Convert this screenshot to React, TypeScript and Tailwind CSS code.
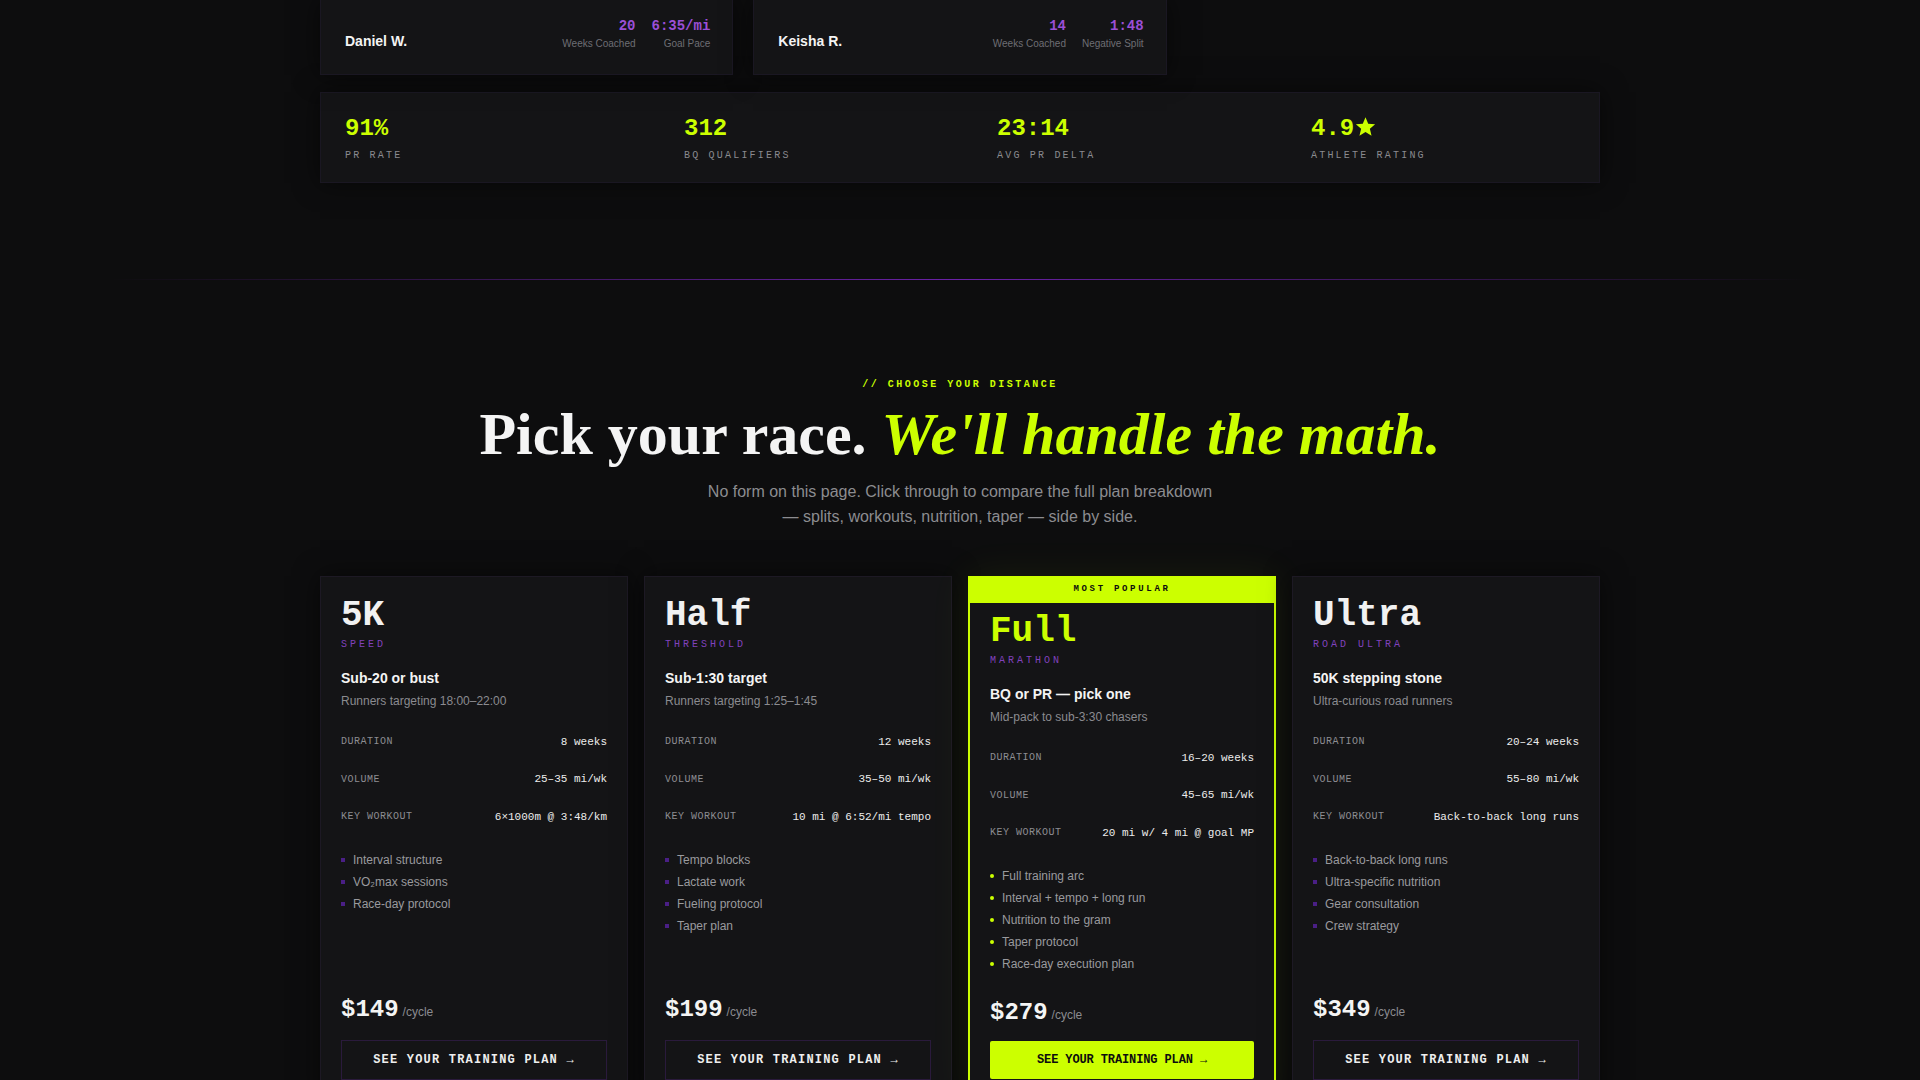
import React from "react";

const mono = "font-['Liberation_Mono',monospace]";
const sans = "font-['Liberation_Sans',Arial,sans-serif]";
const serif = "font-['Liberation_Serif','Times_New_Roman',serif]";

type Plan = {
  name: string;
  tag: string;
  headline: string;
  audience: string;
  duration: string;
  volume: string;
  keyWorkout: string;
  features: React.ReactNode[];
  price: string;
  popular?: boolean;
};

const plans: Plan[] = [
  {
    name: "5K",
    tag: "Speed",
    headline: "Sub-20 or bust",
    audience: "Runners targeting 18:00–22:00",
    duration: "8 weeks",
    volume: "25–35 mi/wk",
    keyWorkout: "6×1000m @ 3:48/km",
    features: ["Interval structure", "VO₂max sessions", "Race-day protocol"],
    price: "$149",
  },
  {
    name: "Half",
    tag: "Threshold",
    headline: "Sub-1:30 target",
    audience: "Runners targeting 1:25–1:45",
    duration: "12 weeks",
    volume: "35–50 mi/wk",
    keyWorkout: "10 mi @ 6:52/mi tempo",
    features: ["Tempo blocks", "Lactate work", "Fueling protocol", "Taper plan"],
    price: "$199",
  },
  {
    name: "Full",
    tag: "Marathon",
    headline: "BQ or PR — pick one",
    audience: "Mid-pack to sub-3:30 chasers",
    duration: "16–20 weeks",
    volume: "45–65 mi/wk",
    keyWorkout: "20 mi w/ 4 mi @ goal MP",
    features: [
      "Full training arc",
      "Interval + tempo + long run",
      "Nutrition to the gram",
      "Taper protocol",
      "Race-day execution plan",
    ],
    price: "$279",
    popular: true,
  },
  {
    name: "Ultra",
    tag: "Road Ultra",
    headline: "50K stepping stone",
    audience: "Ultra-curious road runners",
    duration: "20–24 weeks",
    volume: "55–80 mi/wk",
    keyWorkout: "Back-to-back long runs",
    features: [
      "Back-to-back long runs",
      "Ultra-specific nutrition",
      "Gear consultation",
      "Crew strategy",
    ],
    price: "$349",
  },
];

const testimonials = [
  {
    name: "Daniel W.",
    stats: [
      { value: "20", label: "Weeks Coached" },
      { value: "6:35/mi", label: "Goal Pace" },
    ],
  },
  {
    name: "Keisha R.",
    stats: [
      { value: "14", label: "Weeks Coached" },
      { value: "1:48", label: "Negative Split" },
    ],
  },
];

const Star = () => (
  <svg viewBox="0 0 24 24" className="ml-[1px] inline-block h-[21px] w-[21px] -translate-y-[2px] align-middle">
    <path
      d="M12 1.5l3.1 7.4 7.9.6-6 5.2 1.9 7.8L12 18.3l-6.9 4.2 1.9-7.8-6-5.2 7.9-.6z"
      fill="#ccff00"
    />
  </svg>
);

const results: { value: React.ReactNode; label: string }[] = [
  { value: "91%", label: "PR Rate" },
  { value: "312", label: "BQ Qualifiers" },
  { value: "23:14", label: "Avg PR Delta" },
  {
    value: (
      <>
        4.9
        <Star />
      </>
    ),
    label: "Athlete Rating",
  },
];

const SpecRow = ({ label, value }: { label: string; value: string }) => (
  <div className="flex h-[37.5px] items-center justify-between">
    <span className={`${mono} text-[10px] uppercase tracking-[0.05em] text-[#8d8d92]`}>{label}</span>
    <span className={`${mono} text-[11px] text-[#ececec]`}>{value}</span>
  </div>
);

const PlanCard = ({ plan }: { plan: Plan }) => {
  const hot = plan.popular;
  return (
    <div
      className={`flex flex-col bg-[#141416] ${
        hot
          ? "border-2 border-[#ccff00] shadow-[0_0_40px_rgba(204,255,0,0.07)]"
          : "border border-[#1d1924] shadow-[0_0_24px_rgba(0,0,0,0.55)]"
      }`}
    >
      {hot && (
        <div
          className={`${mono} flex h-[25px] items-center justify-center bg-[#ccff00] text-[9px] font-bold uppercase tracking-[0.3em] text-[#0d0d0e]`}
        >
          Most Popular
        </div>
      )}
      <div className={`flex flex-1 flex-col px-5 pb-5 ${hot ? "pt-[11px]" : "pt-[21px]"}`}>
        <h3
          className={`${mono} text-[36px] font-bold leading-none ${
            hot ? "text-[#ccff00]" : "text-[#f1f1f1]"
          }`}
        >
          {plan.name}
        </h3>
        <div className={`${mono} mt-1 text-[10px] uppercase leading-[14px] tracking-[0.3em] text-[#8142bd]`}>
          {plan.tag}
        </div>
        <div className={`${sans} mt-[16px] text-[14px] font-bold leading-5 text-[#f4f4f4]`}>
          {plan.headline}
        </div>
        <div className={`${sans} mt-[5px] text-[12px] leading-4 text-[#8b8b90]`}>{plan.audience}</div>

        <div className="mt-[14.5px]">
          <SpecRow label="Duration" value={plan.duration} />
          <SpecRow label="Volume" value={plan.volume} />
          <SpecRow label="Key Workout" value={plan.keyWorkout} />
        </div>

        <ul className="mt-[13px] flex flex-col">
          {plan.features.map((f, i) => (
            <li key={i} className={`${sans} flex h-[22px] items-center gap-2 text-[12px] text-[#9a9a9e]`}>
              <span
                className={`h-[4px] w-[4px] ${hot ? "rounded-full bg-[#ccff00]" : "bg-[#4a1f86]"}`}
              />
              {f}
            </li>
          ))}
        </ul>

        <div className={`mt-auto ${hot ? "pt-[22px]" : "pt-5"}`}>
          <div className="flex items-baseline gap-1 leading-8">
            <span className={`${mono} text-[24px] font-bold text-[#f4f4f4]`}>{plan.price}</span>
            <span className={`${sans} text-[12px] text-[#8b8b90]`}>/cycle</span>
          </div>
          <button
            className={`${mono} flex w-full items-center justify-center text-[12px] font-bold uppercase ${
              hot
                ? "mt-[10px] h-[38px] rounded-[2px] bg-[#ccff00] tracking-[-0.01em] text-[#0d0d0e]"
                : "mt-3 h-10 border border-[#2a1a3c] tracking-[0.1em] text-[#eeeeee]"
            }`}
          >
            See your training plan →
          </button>
        </div>
      </div>
    </div>
  );
};

export default function App() {
  return (
    <div className="min-h-screen overflow-hidden bg-[#0d0d0e] pb-24">
      <div className="mx-auto w-[1280px]">
        {/* athlete quotes, bottom rows */}
        <div className="grid grid-cols-3 gap-5">
          {testimonials.map((t) => (
            <div
              key={t.name}
              className="flex items-end justify-between border-x border-b border-[#1a1722] bg-[#141416] pb-[23px] pl-6 pr-[22px] pt-[17px] shadow-[0_0_24px_rgba(0,0,0,0.55)]"
            >
              <span className={`${sans} text-[14px] font-bold leading-5 text-[#f4f4f4]`}>{t.name}</span>
              <div className="flex gap-4">
                {t.stats.map((s) => (
                  <div key={s.label} className="flex flex-col items-end">
                    <span className={`${mono} text-[14px] font-bold leading-[18px] text-[#9b4fd6]`}>
                      {s.value}
                    </span>
                    <span className={`${sans} mt-[2px] text-[10px] leading-[14px] text-[#6e6e74]`}>
                      {s.label}
                    </span>
                  </div>
                ))}
              </div>
            </div>
          ))}
        </div>

        {/* results strip */}
        <div className="mt-[17px] grid grid-cols-[339px_313px_314px_1fr] border border-[#1a1722] bg-[#141416] px-6 pb-[18px] pt-[20px] shadow-[0_0_24px_rgba(0,0,0,0.55)]">
          {results.map((r) => (
            <div key={r.label} className="flex flex-col">
              <span className={`${mono} text-[24px] font-bold leading-8 text-[#ccff00]`}>{r.value}</span>
              <span className={`${mono} mt-[3px] text-[10px] uppercase leading-4 tracking-[0.22em] text-[#8a8a8f]`}>
                {r.label}
              </span>
            </div>
          ))}
        </div>
      </div>

      <div className="mx-[110px] mt-24 h-px bg-gradient-to-r from-transparent via-[#6b21a8] to-transparent" />

      <section className="flex flex-col items-center pt-[97px]">
        <div className={`${mono} text-[10px] font-bold uppercase leading-4 tracking-[0.25em] text-[#ccff00]`}>
          // Choose your distance
        </div>
        <h2 className={`${serif} mt-[8px] text-[60px] font-bold leading-[1.1] text-[#f4f4f4]`}>
          Pick your race. <em className="text-[#ccff00]">We'll handle the math.</em>
        </h2>
        <p className={`${sans} mt-[13px] max-w-[520px] text-center text-[16px] leading-[1.55] text-[#8c8c90]`}>
          No form on this page. Click through to compare the full plan breakdown — splits, workouts,
          nutrition, taper — side by side.
        </p>

        <div className="mt-[46px] grid w-[1280px] grid-cols-4 gap-4">
          {plans.map((p) => (
            <PlanCard key={p.name} plan={p} />
          ))}
        </div>
      </section>
    </div>
  );
}
